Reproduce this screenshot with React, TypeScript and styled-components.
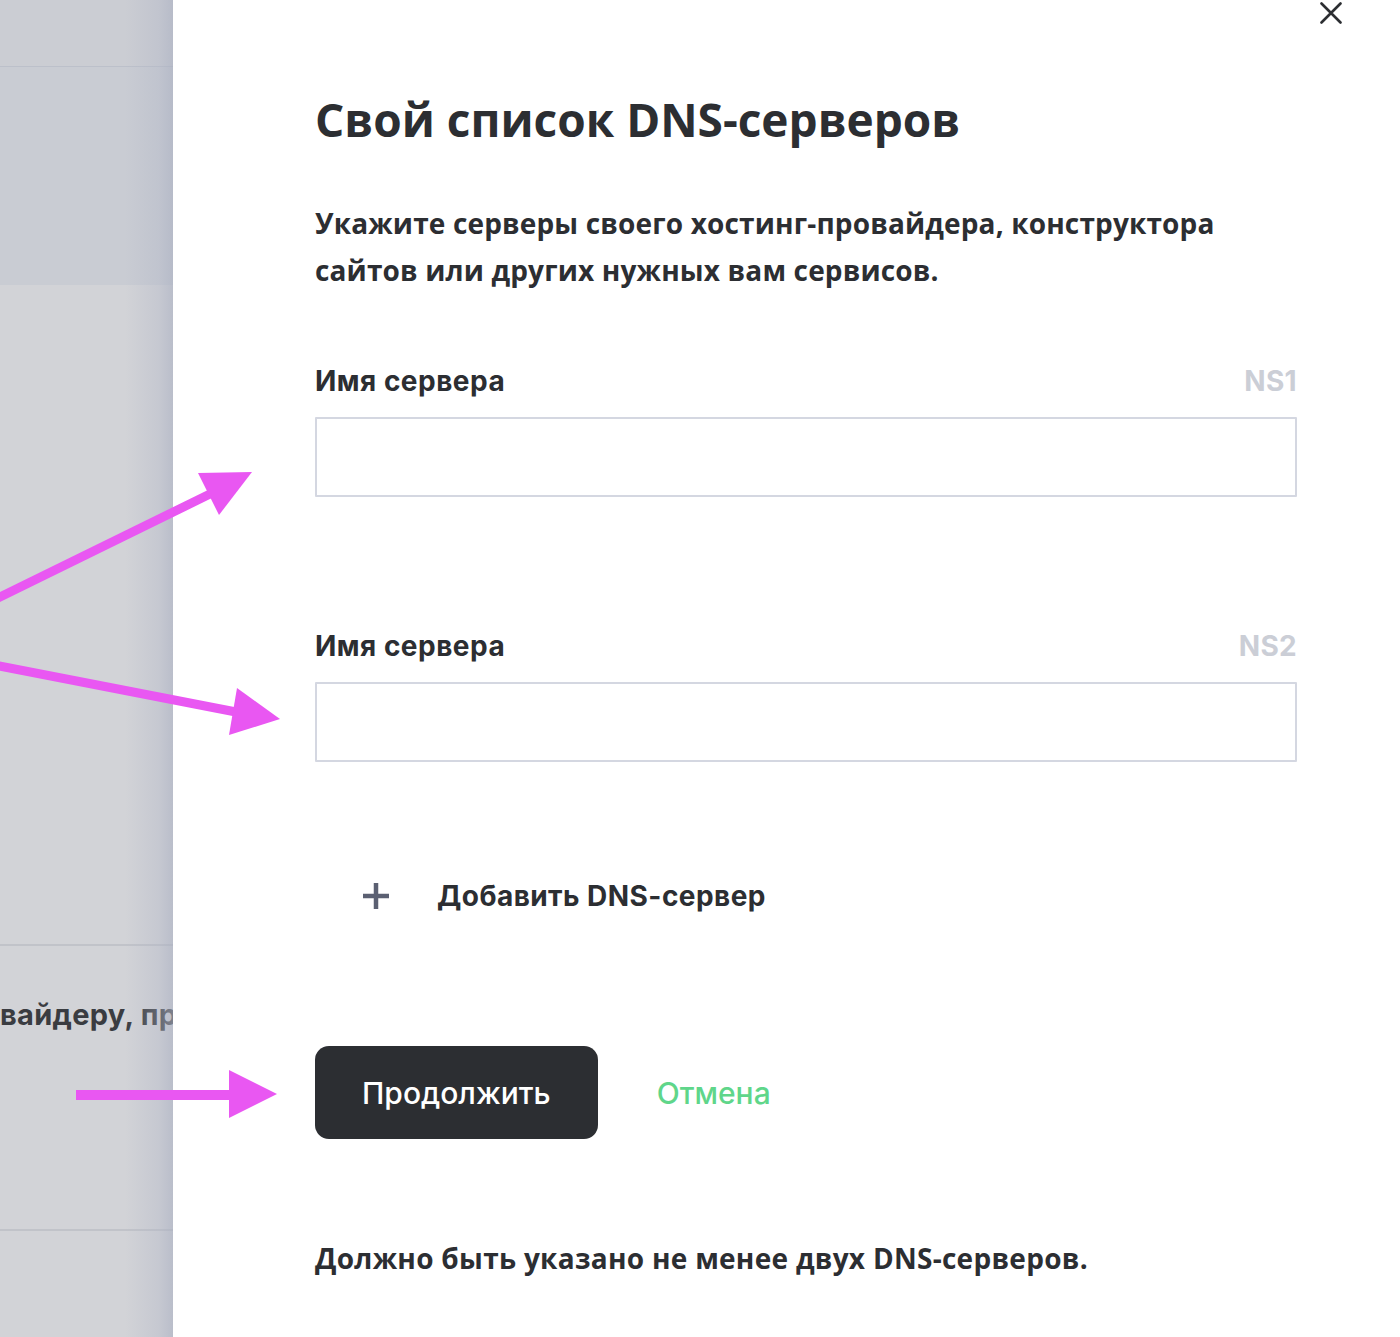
import React from "react";
import styled, { createGlobalStyle } from "styled-components";

const GlobalStyle = createGlobalStyle`
  html, body { margin: 0; padding: 0; background: #ffffff; }
  body { font-family: "Open Sans", "Noto Sans", sans-serif; }
  * { box-sizing: border-box; }
`;

const Page = styled.div`
  position: relative;
  display: flex;
  width: 1400px;
  height: 1337px;
  overflow: hidden;
`;

const Backdrop = styled.div`
  position: relative;
  width: 173px;
  flex: 0 0 173px;
  display: flex;
  flex-direction: column;
  background: #d2d3d7;
  overflow: hidden;
  &::after {
    content: "";
    position: absolute;
    top: 0;
    right: 0;
    bottom: 0;
    width: 48px;
    background: linear-gradient(to right, rgba(176, 181, 198, 0) 0%, rgba(176, 181, 198, 0.35) 70%, rgba(170, 176, 194, 0.6) 100%);
    pointer-events: none;
  }
`;

const BackTop = styled.div`
  height: 67px;
  background: #cbcdd3;
  border-bottom: 1px solid #bcc0ca;
  box-shadow: 0 2px 3px rgba(150, 155, 170, 0.25);
`;

const BackBand = styled.div`
  height: 218px;
  background: #c9ccd3;
`;

const BackBody = styled.div<{ $h: number }>`
  height: ${(p) => p.$h}px;
  border-bottom: 2px solid #c1c3c9;
  display: flex;
  align-items: flex-start;
  overflow: hidden;
`;

const BackText = styled.div`
  margin-top: 49px;
  white-space: nowrap;
  font-family: "Inter", "Noto Sans", sans-serif;
  font-weight: 700;
  font-size: 29px;
  line-height: 40px;
  color: #3a3c41;
  letter-spacing: 0.3px;
`;

const Modal = styled.div`
  position: relative;
  flex: 1;
  background: #ffffff;
  padding: 91px 103px 0 142px;
  display: flex;
  flex-direction: column;
`;

const CloseButton = styled.button`
  position: absolute;
  top: 0;
  right: 56px;
  width: 26px;
  height: 26px;
  padding: 2px;
  border: 0;
  background: transparent;
  display: flex;
  align-items: center;
  justify-content: center;
`;

const Title = styled.h1`
  margin: 0;
  font-family: "Open Sans", sans-serif;
  font-weight: 700;
  font-size: 46px;
  line-height: 56px;
  color: #2c2e32;
  letter-spacing: 0;
`;

const Description = styled.p`
  margin: 53px 0 0;
  font-family: "Open Sans", sans-serif;
  font-weight: 700;
  font-size: 28px;
  line-height: 47px;
  color: #2c2e32;
  letter-spacing: 0.15px;
`;

const Field = styled.div<{ $top: number }>`
  margin-top: ${(p) => p.$top}px;
  display: flex;
  flex-direction: column;
  gap: 16px;
`;

const LabelRow = styled.div`
  display: flex;
  justify-content: space-between;
  align-items: center;
  height: 40px;
`;

const Label = styled.label`
  font-family: "Inter", "Noto Sans", sans-serif;
  font-weight: 700;
  font-size: 28px;
  letter-spacing: 0.5px;
  color: #2c2e32;
`;

const Hint = styled.span`
  font-family: "Inter", "Noto Sans", sans-serif;
  font-weight: 700;
  font-size: 28px;
  letter-spacing: 0.3px;
  color: #cbced6;
`;

const Input = styled.input`
  width: 100%;
  height: 80px;
  border: 2px solid #d4d7e1;
  border-radius: 1px;
  background: #ffffff;
  outline: none;
  padding: 0 20px;
  font-size: 24px;
`;

const AddRow = styled.div`
  margin-top: 114px;
  height: 40px;
  display: flex;
  align-items: center;
  gap: 47px;
  padding-left: 47px;
`;

const AddText = styled.span`
  font-family: "Inter", "Noto Sans", sans-serif;
  font-weight: 700;
  font-size: 28px;
  letter-spacing: 0.45px;
  color: #2c2e32;
`;

const Actions = styled.div`
  margin-top: 130px;
  display: flex;
  align-items: center;
  gap: 59px;
`;

const PrimaryButton = styled.button`
  height: 93px;
  padding: 0 47px;
  border: 0;
  border-radius: 14px;
  background: #2c2e32;
  color: #ffffff;
  font-family: "Inter", "Noto Sans", sans-serif;
  font-weight: 500;
  font-size: 30px;
`;

const LinkButton = styled.button`
  border: 0;
  background: transparent;
  padding: 0;
  color: #5fd68a;
  font-family: "Inter", "Noto Sans", sans-serif;
  font-weight: 500;
  font-size: 30px;
`;

const Note = styled.p`
  margin: 99px 0 0;
  font-family: "Open Sans", sans-serif;
  font-weight: 700;
  font-size: 28px;
  line-height: 40px;
  letter-spacing: 0.28px;
  color: #2c2e32;
`;

const ArrowLayer = styled.svg`
  position: absolute;
  top: 0;
  left: 0;
  width: 1400px;
  height: 1337px;
  pointer-events: none;
`;

const ARROW = "#e957f2";

export default function App() {
  return (
    <>
      <GlobalStyle />
      <Page>
        <Backdrop>
          <BackTop />
          <BackBand />
          <BackBody $h={661} />
          <BackBody $h={285}>
            <BackText>вайдеру, пр</BackText>
          </BackBody>
        </Backdrop>
        <Modal>
          <CloseButton aria-label="Закрыть">
            <svg width="22" height="22" viewBox="0 0 22 22">
              <path d="M1.5 1.5 L20.5 20.5 M20.5 1.5 L1.5 20.5" stroke="#2c2e32" strokeWidth="2.6" strokeLinecap="round" />
            </svg>
          </CloseButton>
          <Title>Свой список DNS-серверов</Title>
          <Description>
            Укажите серверы своего хостинг-провайдера, конструктора
            <br />
            сайтов или других нужных вам сервисов.
          </Description>
          <Field $top={67}>
            <LabelRow>
              <Label>Имя сервера</Label>
              <Hint>NS1</Hint>
            </LabelRow>
            <Input />
          </Field>
          <Field $top={129}>
            <LabelRow>
              <Label>Имя сервера</Label>
              <Hint>NS2</Hint>
            </LabelRow>
            <Input />
          </Field>
          <AddRow>
            <svg width="28" height="28" viewBox="0 0 28 28">
              <path d="M14 1 V27 M1 14 H27" stroke="#5b6072" strokeWidth="4.5" />
            </svg>
            <AddText>Добавить DNS-сервер</AddText>
          </AddRow>
          <Actions>
            <PrimaryButton>Продолжить</PrimaryButton>
            <LinkButton>Отмена</LinkButton>
          </Actions>
          <Note>Должно быть указано не менее двух DNS-серверов.</Note>
        </Modal>
        <ArrowLayer viewBox="0 0 1400 1337">
          <line x1="-6" y1="600" x2="212" y2="493" stroke={ARROW} strokeWidth="9" />
          <polygon points="198,473 252,472 219,515" fill={ARROW} />
          <line x1="-6" y1="665" x2="236" y2="712" stroke={ARROW} strokeWidth="9" />
          <polygon points="237,688 280,719 229,735" fill={ARROW} />
          <line x1="76" y1="1095" x2="232" y2="1095" stroke={ARROW} strokeWidth="10" />
          <polygon points="229,1070 277,1094 229,1118" fill={ARROW} />
        </ArrowLayer>
      </Page>
    </>
  );
}
